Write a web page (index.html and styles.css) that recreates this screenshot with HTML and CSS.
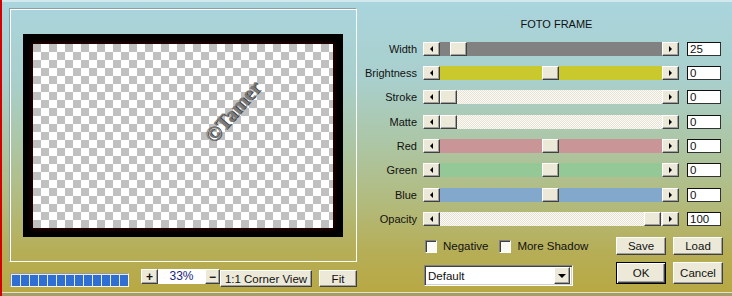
FILE: index.html
```html
<!DOCTYPE html>
<html>
<head>
<meta charset="utf-8">
<link rel="stylesheet" href="styles.css">
</head>
<body>
<div class="window">
  <div class="left">
    <div class="group">
      <div class="frame">
        <div class="canvas"><span class="mark">©Tamer</span></div>
      </div>
    </div>
    <div class="leftbar">
      <div class="progress"><i></i><i></i><i></i><i></i><i></i><i></i><i></i><i></i><i></i><i></i><i></i><i></i><i></i></div>
      <div class="tiny plus">+</div>
      <div class="zoomval">33%</div>
      <div class="tiny minus">−</div>
      <div class="btn corner">1:1 Corner View</div>
      <div class="btn fit">Fit</div>
    </div>
  </div>
  <div class="right">
    <div class="title">FOTO FRAME</div>
    <div class="sliders">
      <div class="lbl">Width</div>
      <div class="scroll t-gray"><span class="arr l"></span><div class="trk"><span class="thumb" style="margin-left:10px"></span></div><span class="arr r"></span></div>
      <div class="num">25</div>

      <div class="lbl">Brightness</div>
      <div class="scroll t-yellow"><span class="arr l"></span><div class="trk"><span class="thumb" style="margin-left:102px"></span></div><span class="arr r"></span></div>
      <div class="num">0</div>

      <div class="lbl">Stroke</div>
      <div class="scroll t-dither"><span class="arr l"></span><div class="trk"><span class="thumb" style="margin-left:0px"></span></div><span class="arr r"></span></div>
      <div class="num">0</div>

      <div class="lbl">Matte</div>
      <div class="scroll t-dither"><span class="arr l"></span><div class="trk"><span class="thumb" style="margin-left:0px"></span></div><span class="arr r"></span></div>
      <div class="num">0</div>

      <div class="lbl">Red</div>
      <div class="scroll t-red"><span class="arr l"></span><div class="trk"><span class="thumb" style="margin-left:102px"></span></div><span class="arr r"></span></div>
      <div class="num">0</div>

      <div class="lbl">Green</div>
      <div class="scroll t-green"><span class="arr l"></span><div class="trk"><span class="thumb" style="margin-left:102px"></span></div><span class="arr r"></span></div>
      <div class="num">0</div>

      <div class="lbl">Blue</div>
      <div class="scroll t-blue"><span class="arr l"></span><div class="trk"><span class="thumb" style="margin-left:102px"></span></div><span class="arr r"></span></div>
      <div class="num">0</div>

      <div class="lbl">Opacity</div>
      <div class="scroll t-dither"><span class="arr l"></span><div class="trk"><span class="thumb" style="margin-left:204px"></span></div><span class="arr r"></span></div>
      <div class="num">100</div>
    </div>
    <div class="bottom">
      <div class="opts">
        <div class="checks">
          <span class="cb"></span><span class="cbl neg">Negative</span>
          <span class="cb"></span><span class="cbl">More Shadow</span>
        </div>
        <div class="select"><span class="selval">Default</span><span class="dd"><span class="tri"></span></span></div>
      </div>
      <div class="btns">
        <div class="btn">Save</div>
        <div class="btn">Load</div>
        <div class="btn ok">OK</div>
        <div class="btn">Cancel</div>
      </div>
    </div>
  </div>
</div>
</body>
</html>
```

FILE: styles.css
```css
* { box-sizing: border-box; }
html, body { margin: 0; padding: 0; }
body {
  width: 732px;
  height: 296px;
  overflow: hidden;
  font-family: "Liberation Sans", Arial, sans-serif;
  font-size: 11px;
  color: #111;
  white-space: nowrap;
}
.window {
  width: 732px;
  height: 296px;
  display: flex;
  border-left: 2px solid #d40000;
  background: linear-gradient(to bottom, #aad5de 0%, #a9cfcb 28%, #acc6a6 48%, #b2bb7e 68%, #b6ad55 86%, #b8a842 100%);
  box-shadow: inset 0 2px 0 #d2e8ec, inset 0 -3px 0 #a39d66, inset 0 -4px 0 #e4e0d0;
}

/* left column */
.left {
  width: 355px;
  padding-left: 7px;
  display: flex;
  flex-direction: column;
}
.group {
  margin-top: 8px;
  width: 348px;
  height: 254px;
  border: 1px solid;
  border-color: #8aa0a4 #fff #fff #8aa0a4;
  box-shadow: inset 1px 1px 0 #fff;
  display: flex;
  align-items: center;
  justify-content: center;
}
.frame {
  width: 320px;
  height: 203px;
  background: #000;
  padding: 10px 10px 9px 10px;
}
.canvas {
  position: relative;
  width: 300px;
  height: 184px;
  background-color: #fff;
  background-image:
    linear-gradient(45deg, #c0c0c0 25%, transparent 25%, transparent 75%, #c0c0c0 75%),
    linear-gradient(45deg, #c0c0c0 25%, transparent 25%, transparent 75%, #c0c0c0 75%);
  background-size: 16px 16px;
  background-position: 8px 0, 0 8px;
  box-shadow: 0 0 5px 1px rgba(70, 0, 0, 0.8);
}
.mark {
  position: absolute;
  left: 200px;
  top: 68px;
  transform: translate(-50%, -50%) rotate(-49deg);
  font-family: "Liberation Serif", "Times New Roman", serif;
  font-weight: bold;
  font-size: 21px;
  color: #7a7a7a;
  text-shadow: 1px 1px 0 #444;
}
.leftbar {
  margin-top: 7px;
  display: flex;
  align-items: flex-start;
}
.progress {
  margin-left: 1px;
  margin-top: 4px;
  width: 119px;
  height: 14px;
  border: 1px solid;
  border-color: #9a9a8a #f4f4ec #f4f4ec #9a9a8a;
  background: #e6eaee;
  padding: 1px 0 0 1px;
  display: flex;
  gap: 1px;
}
.progress i {
  display: block;
  width: 8px;
  height: 11px;
  background: #2f6fd2;
}
.tiny {
  width: 17px;
  height: 15px;
  background: #ece9d8;
  border: 1px solid;
  border-color: #fff #404040 #404040 #fff;
  box-shadow: inset -1px -1px 0 #a0a0a0;
  display: flex;
  align-items: center;
  justify-content: center;
  font-weight: bold;
  font-size: 12px;
  line-height: 1;
}
.plus { margin-left: 12px; }
.minus { width: 15px; }
.zoomval {
  width: 47px;
  height: 15px;
  background: #fff;
  color: #1a237e;
  text-align: center;
  line-height: 15px;
  font-size: 12px;
}
.btn {
  background: #ece9d8;
  border: 1px solid;
  border-color: #fff #404040 #404040 #fff;
  box-shadow: inset -1px -1px 0 #a0a0a0;
  display: flex;
  align-items: center;
  justify-content: center;
  color: #111;
  font-size: 11.5px;
}
.corner { margin-top: 1px; width: 92px; height: 17px; }
.fit { margin-top: 1px; margin-left: 7px; width: 38px; height: 17px; }

/* right column */
.right {
  flex: 1;
  padding-top: 17px;
  display: flex;
  flex-direction: column;
}
.title {
  padding-left: 24px;
  text-align: center;
  line-height: 15px;
  height: 15px;
}
.sliders {
  margin-top: 9.5px;
  display: grid;
  grid-template-columns: 60px 256px 36px;
  column-gap: 6px;
  row-gap: 10.4px;
  grid-auto-rows: 14px;
}
.sliders .num { margin-left: 2px; }
.lbl {
  text-align: right;
  line-height: 14px;
}
.scroll {
  display: flex;
  height: 14px;
}
.arr {
  width: 17px;
  height: 14px;
  flex: none;
  background: #ece9d8;
  border: 1px solid;
  border-color: #fff #404040 #404040 #fff;
  box-shadow: inset -1px -1px 0 #a0a0a0;
  display: flex;
  align-items: center;
  justify-content: center;
}
.arr::before {
  content: "";
  width: 0;
  height: 0;
  border-top: 3px solid transparent;
  border-bottom: 3px solid transparent;
}
.arr.l::before { border-right: 3px solid #000; }
.arr.r::before { border-left: 3px solid #000; }
.trk {
  flex: 1;
  display: flex;
}
.thumb {
  flex: none;
  width: 17px;
  height: 14px;
  background: #ece9d8;
  border: 1px solid;
  border-color: #fff #404040 #404040 #fff;
  box-shadow: inset -1px -1px 0 #a0a0a0;
}
.t-gray .trk { background: #818181; }
.t-yellow .trk { background: #c9c82c; }
.t-red .trk { background: #c99597; }
.t-green .trk { background: #94c896; }
.t-blue .trk { background: #82a9cb; }
.t-dither .trk {
  background: repeating-conic-gradient(#fbfaf4 0 25%, #e6e3d6 0 50%) 0 0 / 2px 2px;
}
.num {
  height: 14px;
  background: #fff;
  border: 1px solid #111;
  border-right-color: #333;
  border-bottom-color: #333;
  line-height: 12px;
  padding-left: 2px;
  font-size: 11.5px;
}
.bottom {
  margin-top: 11px;
  padding-left: 67px;
  display: flex;
}
.opts {
  width: 149px;
  display: flex;
  flex-direction: column;
}
.checks {
  width: max-content;
  height: 18px;
  display: flex;
  align-items: center;
  font-size: 11.5px;
}
.cb {
  flex: none;
  width: 12px;
  height: 13px;
  margin-left: 1px;
  background: #fbfbf5;
  border: 1px solid;
  border-color: #808080 #fff #fff #808080;
  box-shadow: inset 1px 1px 0 #404040;
}
.cbl { margin-left: 6px; }
.cbl.neg { margin-right: 10px; }
.select {
  margin-top: 10px;
  width: 149px;
  height: 21px;
  background: #fff;
  border: 1px solid;
  border-color: #808080 #fff #fff #808080;
  box-shadow: inset 1px 1px 0 #404040, inset -1px -1px 0 #d4d0c8;
  display: flex;
  align-items: center;
  padding: 2px 2px 2px 3px;
  font-size: 11.5px;
}
.selval { flex: 1; }
.dd {
  flex: none;
  width: 16px;
  height: 17px;
  background: #ece9d8;
  border: 1px solid;
  border-color: #fff #404040 #404040 #fff;
  box-shadow: inset -1px -1px 0 #a0a0a0;
  display: flex;
  align-items: center;
  justify-content: center;
}
.tri {
  width: 0;
  height: 0;
  border-left: 4px solid transparent;
  border-right: 4px solid transparent;
  border-top: 4px solid #000;
}
.btns {
  margin-left: 43px;
  display: grid;
  grid-template-columns: 50px 50px;
  grid-template-rows: 18px 22px;
  column-gap: 7px;
  row-gap: 7px;
}
.btn.ok {
  border: 1px solid #000;
  box-shadow: inset 1px 1px 0 #fff, inset -1px -1px 0 #404040, inset -2px -2px 0 #a0a0a0;
}
```
